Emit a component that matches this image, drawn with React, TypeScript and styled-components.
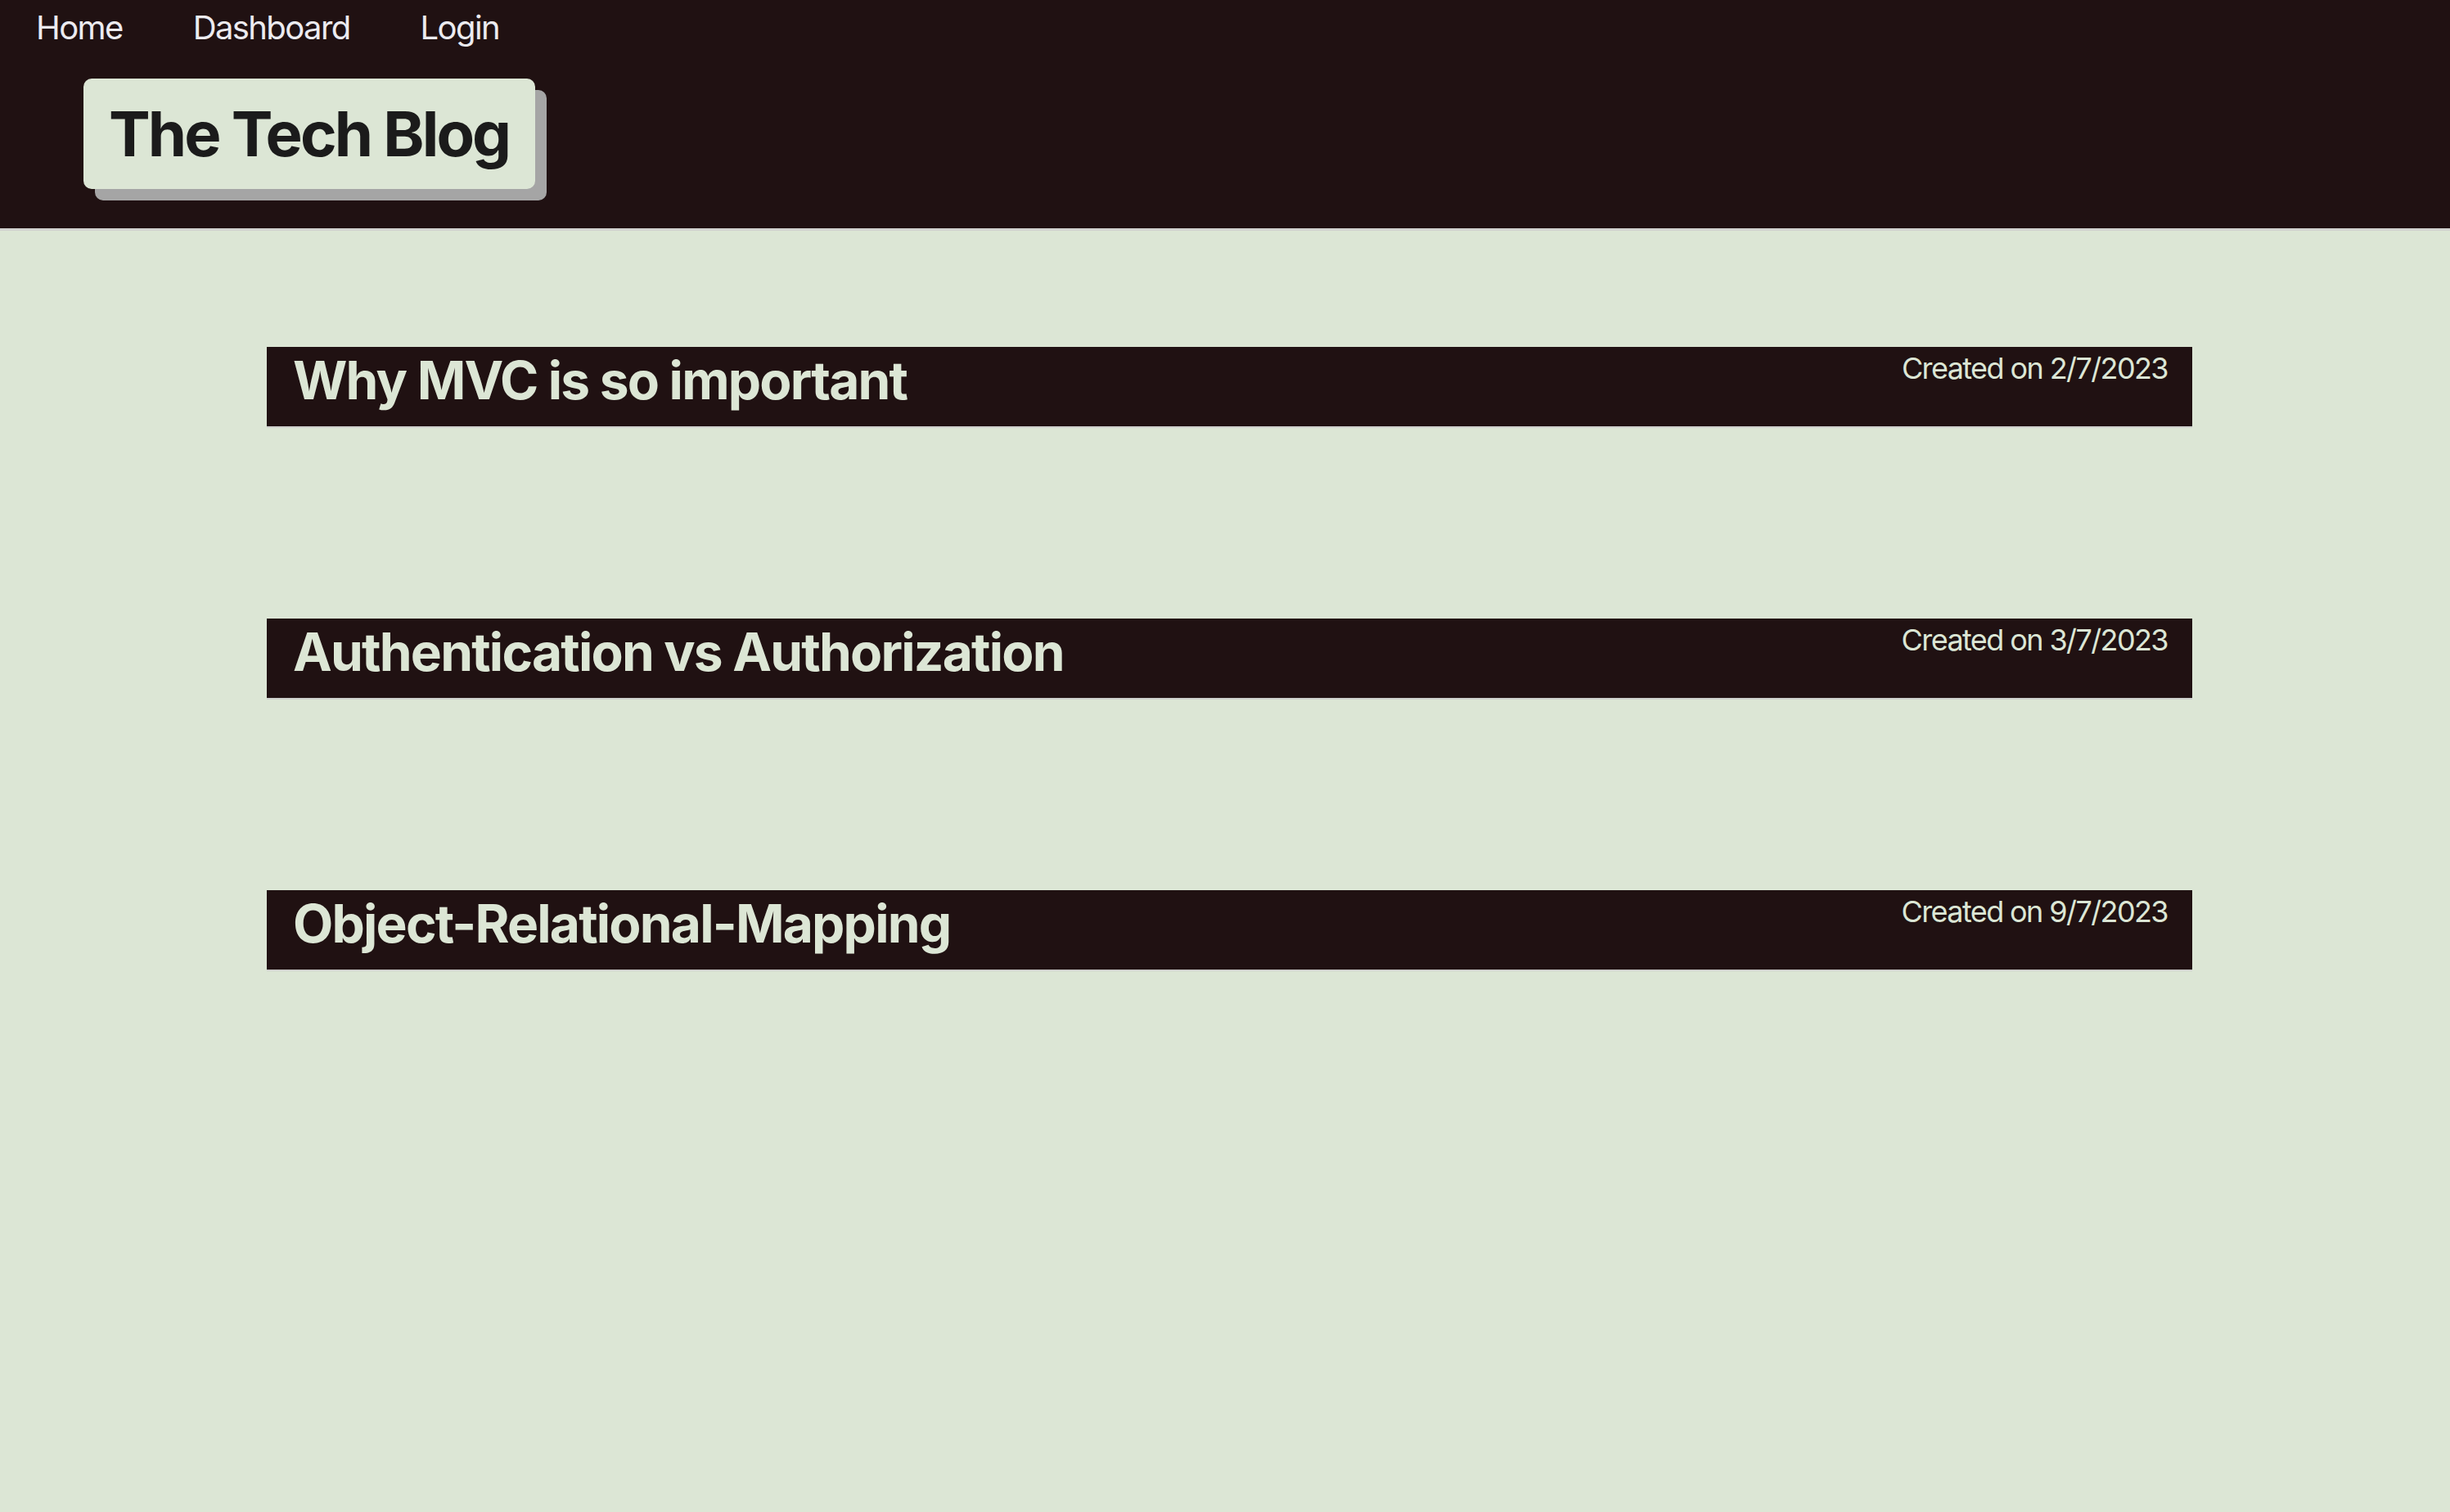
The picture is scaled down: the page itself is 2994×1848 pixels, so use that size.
import React from "react";
import styled, { createGlobalStyle } from "styled-components";

const GlobalStyle = createGlobalStyle`
  html, body {
    margin: 0;
    padding: 0;
    background: #dce6d5;
  }
  body {
    font-family: Inter, "Noto Sans", sans-serif;
    min-height: 1848px;
  }
  * { box-sizing: border-box; }
`;

const Header = styled.header`
  background: #201112;
  height: 282px;
  border-bottom: 3px solid #d2d3d0;
  display: flex;
  flex-direction: column;
`;

const Nav = styled.nav`
  display: flex;
  padding: 10px 0 0 1px;
`;

const NavLink = styled.a`
  font-size: 40px;
  line-height: 48px;
  color: #ecebf0;
  text-decoration: none;
  padding: 0 43px;
  letter-spacing: -1.6px;
`;

const TitleWrap = styled.div`
  margin: 38px 0 0 102px;
  align-self: flex-start;
`;

const TitleBox = styled.h1`
  margin: 0;
  background: #dce6d5;
  color: #1b1b1b;
  font-size: 76px;
  font-weight: 700;
  line-height: 95px;
  padding: 20px 32px 20px 31px;
  border-radius: 10px;
  box-shadow: 14px 14px 0 #a5a5a5;
  letter-spacing: -2.9px;
`;

const Main = styled.main`
  display: flex;
  flex-direction: column;
  gap: 235px;
  padding: 142px 315px 0 326px;
`;

const PostBar = styled.article`
  height: 97px;
  background: #201112;
  box-shadow: 0 2px 0 #cfd0cd;
  display: flex;
  justify-content: space-between;
  align-items: flex-start;
  padding: 2px 30px 0 32px;
`;

const PostTitle = styled.h2`
  margin: 0;
  font-size: 64px;
  font-weight: 700;
  line-height: 77px;
  color: #dce6d5;
  letter-spacing: -1.8px;
`;

const PostDate = styled.span`
  margin-top: 2px;
  font-size: 36px;
  line-height: 44px;
  color: #dce6d5;
  letter-spacing: -1.6px;
`;

const posts = [
  { title: "Why MVC is so important", date: "2/7/2023" },
  { title: "Authentication vs Authorization", date: "3/7/2023" },
  { title: "Object-Relational-Mapping", date: "9/7/2023" },
];

export default function App() {
  return (
    <>
      <GlobalStyle />
      <Header>
        <Nav>
          <NavLink href="#">Home</NavLink>
          <NavLink href="#">Dashboard</NavLink>
          <NavLink href="#">Login</NavLink>
        </Nav>
        <TitleWrap>
          <TitleBox>The Tech Blog</TitleBox>
        </TitleWrap>
      </Header>
      <Main>
        {posts.map((p) => (
          <PostBar key={p.title}>
            <PostTitle>{p.title}</PostTitle>
            <PostDate>Created on {p.date}</PostDate>
          </PostBar>
        ))}
      </Main>
    </>
  );
}
